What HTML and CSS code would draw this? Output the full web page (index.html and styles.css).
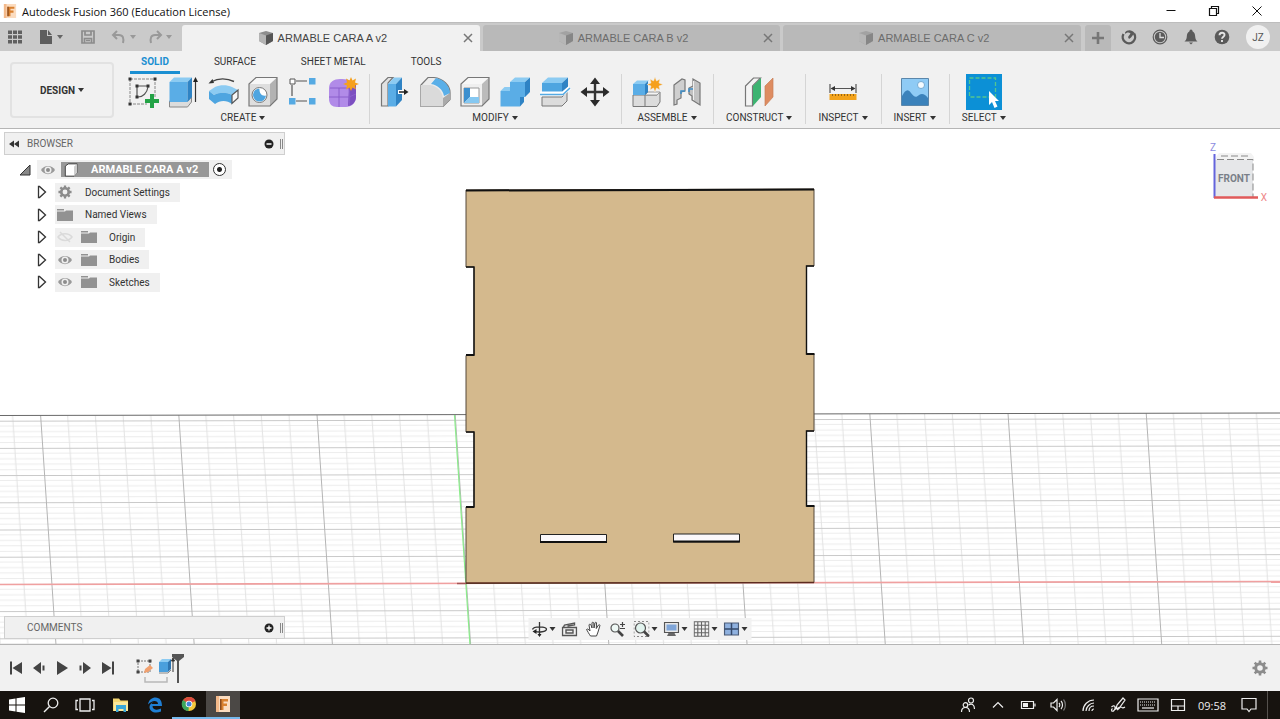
FILE: index.html
```
<!DOCTYPE html>
<html lang="en">
<head>
    <meta charset="UTF-8">
    <title>Autodesk Fusion 360 (Education License)</title>
    <meta name="viewport" content="width=device-width, initial-scale=1.0">
    <link rel="stylesheet" href="styles.css">
</head>
<body>
    <!-- shared icons -->
    <svg class="defs" aria-hidden="true">
        <symbol id="cube" viewBox="0 0 16 16">
            <path d="M1 3 8 1l7 2v8l-7 4-7-4z" fill="#8d8d8d"/>
            <path d="M1 3l7 2.500V15l-7-4z" fill="#b4b4b4"/>
            <path d="M8 5.500 15 3v8l-7 4z" fill="#555"/>
        </symbol>
        <symbol id="close" viewBox="0 0 10 10">
            <path d="M1 1l8 8M9 1L1 9" stroke="currentColor" stroke-width="1.500" fill="none"/>
        </symbol>
        <symbol id="eye" viewBox="0 0 16 12">
            <path d="M1 6C4 0.500 12 0.500 15 6 12 11.500 4 11.500 1 6z" fill="#999"/>
            <circle cx="8" cy="6" r="3.500" fill="#efefef"/>
            <circle cx="8" cy="6" r="2" fill="#8c8c8c"/>
        </symbol>
        <symbol id="folder" viewBox="0 0 16 12">
            <path d="M0 0h7v1.500H0zM0 2.500h8L9 1.500h7V12H0z" fill="#929292"/>
        </symbol>
        <symbol id="expand" viewBox="0 0 10 14">
            <path d="M1.500 1.500v11h1L8.500 7l-6-5.500z" fill="#fff" stroke="#333" stroke-width="1.300"/>
        </symbol>
        <symbol id="gear" viewBox="0 0 16 16">
            <circle cx="8" cy="8" r="4.300" fill="none" stroke="#8c8c8c" stroke-width="3"/>
            <path d="M8 .5v3M8 12.500v3M.5 8h3M12.500 8h3M2.700 2.700l2 2M11.300 11.300l2 2M2.700 13.300l2-2M11.300 4.700l2-2" stroke="#8c8c8c" stroke-width="2.600"/>
        </symbol>
        <symbol id="fusion" viewBox="0 0 16 16">
            <path d="M1 0h14v16H1z" fill="#fbdcc0"/>
            <path d="M1 0h3v16H1z" fill="#f3b98a"/>
            <path d="M5 3h8v2.500H8.500V7.500H12V10H8.500v4H5z" fill="#d9802e"/>
            <path d="M5 3h1.500v11H5z" fill="#8a4a1c"/>
        </symbol>
    </svg>

    <header class="titlebar">
        <svg class="logo" viewBox="0 0 16 16"><use href="#fusion"/></svg>
        <h1>Autodesk Fusion 360 (Education License)</h1>
        <div class="window-buttons">
            <button aria-label="Minimize"><svg viewBox="0 0 12 12"><path d="M1.500 5.500h9" stroke="#111"/></svg></button>
            <button aria-label="Restore"><svg viewBox="0 0 12 12"><path d="M1.500 3.500h7v7h-7zM3.500 3V1.500h7v7H9" fill="none" stroke="#111" stroke-width="1.200"/></svg></button>
            <button aria-label="Close"><svg viewBox="0 0 12 12"><path d="M1.500 1.500l9 9M10.500 1.500l-9 9" stroke="#111"/></svg></button>
        </div>
    </header>

    <nav class="docbar">
        <div class="quick">
            <button aria-label="Data panel"><svg viewBox="0 0 16 16"><path d="M1 1.500h4v3.500H1zM6 1.500h4v3.500H6zM11 1.500h4v3.500h-4zM1 6.300h4v3.500H1zM6 6.300h4v3.500H6zM11 6.300h4v3.500h-4zM1 11h4v3.500H1zM6 11h4v3.500H6zM11 11h4v3.500h-4z" fill="#606060"/></svg></button>
            <button class="file" aria-label="File"><svg viewBox="0 0 16 16"><path d="M2 1h7v6h5v8H2z" fill="#5e5e5e"/><path d="M10 1l4 5h-4z" fill="#5e5e5e"/></svg><span class="caret"></span></button>
            <button class="save" aria-label="Save"><svg viewBox="0 0 16 16"><path d="M2 2h12v12H2zM5 2v4h6V2M4.500 14V9.500h7V14M6 11.500h4" fill="none" stroke="#8c8c8c" stroke-width="1.700"/></svg></button>
            <button class="faded" aria-label="Undo"><svg viewBox="0 0 16 16"><path d="M2 6h6c4 0 5 3 4 8M6 2L2 6l4 4" fill="none" stroke="#999" stroke-width="2"/></svg><span class="caret"></span></button>
            <button class="faded" aria-label="Redo"><svg viewBox="0 0 16 16"><path d="M14 6H8C4 6 3 9 4 14M10 2l4 4-4 4" fill="none" stroke="#999" stroke-width="2"/></svg><span class="caret"></span></button>
        </div>
        <div class="doctabs">
            <div class="doctab active">
                <a href="#"><svg viewBox="0 0 16 16"><use href="#cube"/></svg>ARMABLE CARA A v2</a>
                <button aria-label="Close tab"><svg viewBox="0 0 10 10"><use href="#close"/></svg></button>
            </div>
            <div class="doctab">
                <a href="#"><svg viewBox="0 0 16 16"><use href="#cube"/></svg>ARMABLE CARA B v2</a>
                <button aria-label="Close tab"><svg viewBox="0 0 10 10"><use href="#close"/></svg></button>
            </div>
            <div class="doctab">
                <a href="#"><svg viewBox="0 0 16 16"><use href="#cube"/></svg>ARMABLE CARA C v2</a>
                <button aria-label="Close tab"><svg viewBox="0 0 10 10"><use href="#close"/></svg></button>
            </div>
        </div>
        <button class="new-tab" aria-label="New design"><svg viewBox="0 0 14 14"><path d="M7 1v12M1 7h12" stroke="#777" stroke-width="2.600"/></svg></button>
        <div class="account">
            <button aria-label="Extensions"><svg viewBox="0 0 16 16"><path d="M2.500 5A6.200 6.200 0 1 0 13 4.500" fill="none" stroke="#5a5a5a" stroke-width="2.400"/><path d="M4 3.500C6 .5 11 .5 13.500 4L10 8.500 8 10 7 8l2.500-3.500C8 3 6 3 4 5z" fill="#5a5a5a"/></svg></button>
            <button aria-label="Job status"><svg viewBox="0 0 16 16"><circle cx="8" cy="8" r="6.800" fill="none" stroke="#5a5a5a" stroke-width="1.200"/><circle cx="8" cy="8" r="5.200" fill="#5a5a5a"/><path d="M8 4v4.500h4" fill="none" stroke="#ddd" stroke-width="1.300"/></svg></button>
            <button aria-label="Notifications"><svg viewBox="0 0 16 16"><path d="M8 .5c1 0 1.500 1 1.500 1.800C12 3.500 12 6 12.300 8.500c.2 2 1.200 3 2.200 4h-13c1-1 2-2 2.200-4C4 6 4 3.500 6.500 2.300 6.500 1.500 7 .5 8 .5zM6 13.500h4L8 15.500z" fill="#5a5a5a"/></svg></button>
            <button aria-label="Help"><svg viewBox="0 0 16 16"><circle cx="8" cy="8" r="7.300" fill="#5a5a5a"/><path d="M5.500 6.300C5.500 2.800 10.700 3 10.500 6c0 1.600-2.500 1.800-2.500 3.800M8 11v2" fill="none" stroke="#e4e4e4" stroke-width="1.900"/></svg></button>
            <button class="avatar">JZ</button>
        </div>
    </nav>

    <section class="ribbon">
        <button class="workspace">DESIGN<span class="caret"></span></button>
        <div class="ribbon-main">
            <div class="ribbon-tabs">
                <a href="#" class="current">SOLID</a>
                <a href="#">SURFACE</a>
                <a href="#">SHEET METAL</a>
                <a href="#">TOOLS</a>
            </div>
            <div class="groups">
                <div class="group">
                    <div class="tools">
                        <button aria-label="Create sketch"><svg viewBox="0 0 32 32">
                            <path d="M3 3h25v18M3 3v25h17" fill="none" stroke="#888" stroke-dasharray="3 1"/>
                            <path d="M10 10h11M10 10v11M21 11c-1 6-5 10-10 10" fill="none" stroke="#555" stroke-width="1.200"/>
                            <path d="M1.500 1.500h3v3h-3zM26.500 1.500h3v3h-3zM1.500 26.500h3v3h-3zM8.500 8.500h3v3h-3zM19.500 8.500h3v3h-3zM8.500 19.500h3v3h-3z" fill="#333"/>
                            <path d="M23 18h4v5h5v4h-5v5h-4v-5h-5v-4h5z" fill="#23a346"/>
                        </svg></button>
                        <button aria-label="Extrude"><svg viewBox="0 0 32 32">
                            <path d="M2.500 25h18l4-4v5l-4 5h-18z" fill="#dcdcdc" stroke="#888"/>
                            <path d="M2.500 6L7 1.500h18L20.500 6z" fill="#8ccbf2"/><path d="M2.500 6h18v20h-18z" fill="#5aade6"/><path d="M20.500 6L25 1.500V21l-4.500 5z" fill="#2f83c4"/>
                            <path d="M28.500 26V4" stroke="#333" stroke-width="1.200"/><path d="M28.500 1l2.500 5h-5z" fill="#222"/>
                        </svg></button>
                        <button aria-label="Revolve"><svg viewBox="0 0 32 32">
                            <path d="M5 5.500C11 2 20 2 27 5.500" fill="none" stroke="#444" stroke-width="1.400"/><path d="M1.500 7.500l4-4.500 1.500 4z" fill="#333"/>
                            <path d="M2 15l6-4c5-2.500 12-2.500 17 0l6 3-6 5c-5-3-13-3-18 0z" fill="#8ccbf2"/>
                            <path d="M2 15l5 4c5-3 13-3 18 0v9c-5-4-12-4-17 0l-6-5z" fill="#4ea5e0"/>
                            <path d="M31 14v8l-6 5.500v-8.500z" fill="#f6f6f6" stroke="#555" stroke-width="1.200"/>
                        </svg></button>
                        <button aria-label="Hole"><svg viewBox="0 0 32 32">
                            <path d="M2 8l7-6.500h21L23 8z" fill="#f7f7f7"/><path d="M2 8h21v22H2z" fill="#dedede"/><path d="M23 8l7-6.500V23l-7 7z" fill="#b2b2b2"/>
                            <path d="M2 8l7-6.500h21V23l-7 7H2z" fill="none" stroke="#777" stroke-width="1.200"/>
                            <circle cx="12.500" cy="19" r="7.500" fill="#fff" stroke="#777"/><path d="M12.500 12.500a6.500 6.500 0 1 0 6.500 7c-4 1-7-2-6.500-7z" fill="#4ea5e0"/>
                        </svg></button>
                        <button aria-label="Rectangular pattern"><svg viewBox="0 0 32 32">
                            <path d="M9 5h11M5 9v11M9 25h11" stroke="#555" stroke-width="1.200"/>
                            <path d="M3 3h5v5H3z" fill="#fff" stroke="#555"/><path d="M22 2h6.500v6.500H22zM2 22h6.500v6.500H2zM22 22h6.500v6.500H22z" fill="#55aae3"/>
                        </svg></button>
                        <button aria-label="Create form"><svg viewBox="0 0 32 32">
                            <path d="M2 12c0-6 5-9 11-9s13 1 16 6v12c0 6-5 10-10 10H10c-5 0-8-3-8-8z" fill="#b18be8"/>
                            <path d="M22 11c3 0 5-1 7-3v13c0 5-4 9-8 9z" fill="#7c4fc0"/>
                            <path d="M3 12h19c1 5 1 12 0 18M12 12v19M2 21h20l7-3" fill="none" stroke="#8a5fcc"/>
                            <path d="M24 1l1.500 3.500L29 2.500l-1 4 4 1.500-4 1.500 1 4-3.500-2L24 15l-1.500-3.500-3.500 2 1-4L16 8l4-1.500-1-4 3.500 2z" fill="#f6a01c"/>
                        </svg></button>
                    </div>
                    <button class="menu">CREATE<span class="caret"></span></button>
                </div>
                <div class="group">
                    <div class="tools">
                        <button aria-label="Press pull"><svg viewBox="0 0 32 32">
                            <path d="M2.500 30V8L9 1.500h5L9 7v23z" fill="#e2e2e2" stroke="#777" stroke-width="1.200"/>
                            <path d="M9 8l6-6.500h8L17 8z" fill="#8ccbf2"/><path d="M9 8h8v22.500H9z" fill="#5aade6"/><path d="M17 8l6-6.500V24l-6 6.500z" fill="#2f83c4"/>
                            <path d="M19 16h8" stroke="#fff" stroke-width="4"/><path d="M20 16h7" stroke="#222" stroke-width="1.500"/><path d="M25 13l4.500 3-4.500 3z" fill="#222"/>
                        </svg></button>
                        <button aria-label="Fillet"><svg viewBox="0 0 32 32">
                            <path d="M2 9l7-7.500h6c9 1 16 8 16 15v7l-7 7H2z" fill="#ececec" stroke="#777" stroke-width="1.200"/>
                            <path d="M2 9h9c7 1 12 6 13 13v8.500H2z" fill="#dadada"/><path d="M24 22l7-5v6.500l-7 7z" fill="#aaa"/>
                            <path d="M12 8l5-6c7 1 14 8 14 15l-6 3c-1-6-6-11-13-12z" fill="#5aafe8"/>
                        </svg></button>
                        <button aria-label="Shell"><svg viewBox="0 0 32 32">
                            <path d="M2 8l7-6.500h21L23 8z" fill="#f7f7f7"/><path d="M2 8h21v22H2z" fill="#efefef"/><path d="M23 8l7-6.500V23l-7 7z" fill="#bbb"/>
                            <path d="M2 8l7-6.500h21V23l-7 7H2z" fill="none" stroke="#777" stroke-width="1.200"/>
                            <path d="M5 12h15v15H5z" fill="#fff" stroke="#999"/><path d="M5 12h6v9l-6 6z" fill="#3c8fce"/><path d="M5 27l6-6h9v6z" fill="#86c8f1"/>
                        </svg></button>
                        <button aria-label="Combine"><svg viewBox="0 0 32 32">
                            <path d="M11 6l5-4.500h15L26 6z" fill="#8ccbf2"/><path d="M1.500 15l4-4H11v4z" fill="#8ccbf2"/>
                            <path d="M11 6h15v15h-5v9.500H1.500V15H11z" fill="#5aade6"/><path d="M26 6l5-4.500V16l-5 5zM21 21h4v5l-4 4.500z" fill="#2f83c4"/>
                        </svg></button>
                        <button aria-label="Split body"><svg viewBox="0 0 32 32">
                            <path d="M3 21h20l5-5v9l-5 5H3z" fill="#dcdcdc" stroke="#777"/>
                            <path d="M3 7l6-5.500h20L23 7z" fill="#8ccbf2"/><path d="M3 7h20v10H3z" fill="#4ea5e0"/><path d="M23 7l6-5.500V12l-6 5z" fill="#2f83c4"/>
                            <path d="M1 17.500h23l7-6" fill="none" stroke="#fff" stroke-width="4"/><path d="M1 18.500h23l7-6.500" fill="none" stroke="#55aae3" stroke-width="1.600"/>
                        </svg></button>
                        <button aria-label="Move"><svg viewBox="0 0 32 32">
                            <path d="M16 5v22M5 16h22" stroke="#333" stroke-width="2.400"/>
                            <path d="M16 1.500l5 6.500H11zM16 30.500l5-6.500H11zM1.500 16L8 11v10zM30.500 16L24 11v10z" fill="#2b2b2b"/>
                        </svg></button>
                    </div>
                    <button class="menu">MODIFY<span class="caret"></span></button>
                </div>
                <div class="group">
                    <div class="tools">
                        <button aria-label="New component"><svg viewBox="0 0 32 32">
                            <path d="M2 19h24l3-3v10l-3 4.500H2z" fill="#dcdcdc" stroke="#777"/><path d="M14 19v11.500" stroke="#777"/><path d="M14 19l3-3h12l-3 3z" fill="#f4f4f4" stroke="#999"/>
                            <path d="M2 8l4-3.500h12L14 8z" fill="#8ccbf2"/><path d="M2 8h12v11H2z" fill="#5aade6"/><path d="M14 8l3-3v11l-3 3z" fill="#2f83c4"/>
                            <path d="M24 1l1.500 4L29 3l-1 4 4 1.500-4 1.500 1 4-3.500-2L24 16l-1.500-4-3.500 2 1-4-4-1.500L20 7l-1-4 3.500 2z" fill="#f6a01c" stroke="#f1f1f1" stroke-width=".5"/>
                        </svg></button>
                        <button aria-label="Joint"><svg viewBox="0 0 32 32">
                            <path d="M3 9l8-6 3 1v11l-4 1v6l-4 2v4l-3 1z" fill="#cfcfcf" stroke="#777" stroke-width="1.200"/>
                            <path d="M29 7v22l-8-5v-4l-3-2v-6l4-2V3z" fill="#c2c2c2" stroke="#777" stroke-width="1.200"/><path d="M22.500 5v19" stroke="#eee"/>
                            <path d="M10 18v-3h4M18 16v-3h4" fill="none" stroke="#3e8fc9" stroke-width="1.500"/>
                        </svg></button>
                    </div>
                    <button class="menu">ASSEMBLE<span class="caret"></span></button>
                </div>
                <div class="group">
                    <div class="tools">
                        <button aria-label="Offset plane"><svg viewBox="0 0 32 32">
                            <path d="M2.500 10l8-8h7l-8 8v20h-7z" fill="#f4f4f4" stroke="#777" stroke-width="1.200"/>
                            <path d="M10 10l8-8v19l-8 9z" fill="#3cb371"/><path d="M22 10l8-8v19l-8 9z" fill="#de8c61" stroke="#c98058" stroke-width=".7"/>
                        </svg></button>
                    </div>
                    <button class="menu">CONSTRUCT<span class="caret"></span></button>
                </div>
                <div class="group">
                    <div class="tools">
                        <button aria-label="Measure"><svg viewBox="0 0 32 32">
                            <path d="M3 8v9M29 8v9M5 12.500h22" stroke="#555" stroke-width="1.200"/><path d="M3.500 12.500L8 10v5zM28.500 12.500L24 10v5z" fill="#333"/>
                            <path d="M2.500 18h27v6h-27z" fill="#f3a31b"/><path d="M5 19h23" stroke="#7c5310" stroke-width="1.500" stroke-dasharray="1 2"/>
                        </svg></button>
                    </div>
                    <button class="menu">INSPECT<span class="caret"></span></button>
                </div>
                <div class="group">
                    <div class="tools">
                        <button aria-label="Insert image"><svg viewBox="0 0 32 32">
                            <path d="M2.500 2.500h27v27h-27z" fill="#8fcbf5" stroke="#5b87ab"/>
                            <path d="M3 20c3-6 6-8 9-3 3 4 5 5 8 2 3-2 6-1 9 3v7H3z" fill="#3b82bb"/><circle cx="22" cy="9" r="3.500" fill="#f5fbff" stroke="#5794c2" stroke-width=".7"/>
                        </svg></button>
                    </div>
                    <button class="menu">INSERT<span class="caret"></span></button>
                </div>
                <div class="group">
                    <div class="tools">
                        <button class="picked" aria-label="Select"><svg viewBox="0 0 36 36">
                            <path d="M3.500 4h26v19h-26z" fill="none" stroke="#53c590" stroke-width="1.300" stroke-dasharray="4 2"/>
                            <path d="M23 17v14l3-3 2.500 6 3-1.500-2.500-5.500h4z" fill="#fff"/>
                        </svg></button>
                    </div>
                    <button class="menu">SELECT<span class="caret"></span></button>
                </div>
            </div>
        </div>
    </section>

    <main class="viewport">
        <svg class="scene" viewBox="0 129 1280 516" preserveAspectRatio="xMidYMin slice" role="img" aria-label="Model view">
            <defs>
                <!-- one major cell: 5 x 5 minor lines, origin on the sketch origin -->
                <pattern id="grid" width="138.200" height="27.200" patternUnits="userSpaceOnUse" patternTransform="matrix(1 -0.002 0.067 1 466 583)">
                    <path d="M0 5.400h139M0 10.900h139M0 16.300h139M0 21.800h139" stroke="#ececec"/>
                    <path d="M27.600 0v28M55.300 0v28M82.900 0v28M110.600 0v28" stroke="#e2e2e2"/>
                    <path d="M0 .5h139" stroke="#c8c8c8"/>
                    <path d="M.5 0v28" stroke="#b4b4b4"/>
                </pattern>
            </defs>
            <path d="M0 415.500L1280 413v232H0z" fill="url(#grid)"/>
            <path d="M0 415.500L1280 413" stroke="#6a6a6a"/>
            <path d="M0 584.500L1280 581.500" stroke="#f0a0a0" stroke-width="1.600"/>
            <path d="M454.500 415L470 645" stroke="#8aec8a" stroke-width="1.200"/>
            <path d="M466 190L814 189V266H806.500V354H814V431H806.500V506H814V582.500L466 583.500V507H474V432H466V355.500H474V267H466z" fill="#d4b98d" stroke="#55483a" stroke-width="1"/>
            <path d="M466 190.500L814 189.500" stroke="#111" stroke-width="2"/>
            <path d="M466 267h8v88h-8M466 432h8v75h-8M814 266h-7.500v88h7.500M814 431h-7.500v75h7.500" fill="none" stroke="#111" stroke-width="1.400"/>
            <path d="M466 507h8M806.500 506h8M466 355h8M806.500 354h8" stroke="#111" stroke-width="2.200"/>
            <path d="M457 583.500h9" stroke="#a35555" stroke-width="1.500"/>
            <path d="M466 583L814 582.500" stroke="#5c2a1e" stroke-width="1.300"/>
            <path d="M540.500 534.500h66v8h-66zM673.500 534h66v8h-66z" fill="#fbf8fa" stroke="#222"/>
            <path d="M540 542h67M673 541.500h67" stroke="#111" stroke-width="2"/>
        </svg>

        <aside class="browser">
            <div class="panel-head">
                <button aria-label="Collapse"><svg viewBox="0 0 12 10"><path d="M6 1.500v7L1 5zM11 1.500v7L6 5z" fill="#333"/></svg></button>
                <h2>BROWSER</h2>
                <button aria-label="Hide"><svg viewBox="0 0 10 10"><circle cx="5" cy="5" r="4.500" fill="#222"/><path d="M2.500 5h5" stroke="#fff" stroke-width="1.500"/></svg></button>
                <span class="grip"></span>
            </div>
            <ul class="tree">
                <li class="root">
                    <svg class="arrow" viewBox="0 0 12 12"><path d="M11 1v10H1z" fill="#888" stroke="#333"/></svg>
                    <span class="chip">
                        <svg class="icon" viewBox="0 0 16 12"><use href="#eye"/></svg>
                        <span class="selected"><svg class="icon" viewBox="0 0 16 16"><path d="M1.500 3.500L5 1h10v10l-3.500 4h-10z" fill="#fff" stroke="#333"/><path d="M11.500 4L15 1v10l-3.500 4z" fill="#ccc"/></svg>ARMABLE CARA A v2</span>
                        <input type="radio" name="component" aria-label="Activate component" checked>
                    </span>
                </li>
                <li>
                    <svg class="arrow" viewBox="0 0 10 14"><use href="#expand"/></svg>
                    <span class="chip"><svg class="icon" viewBox="0 0 16 16"><use href="#gear"/></svg>Document Settings</span>
                </li>
                <li>
                    <svg class="arrow" viewBox="0 0 10 14"><use href="#expand"/></svg>
                    <span class="chip"><svg class="icon" viewBox="0 0 16 12"><use href="#folder"/></svg>Named Views</span>
                </li>
                <li>
                    <svg class="arrow" viewBox="0 0 10 14"><use href="#expand"/></svg>
                    <span class="chip"><svg class="icon" viewBox="0 0 16 12"><path d="M1 6C4 1.500 12 1.500 15 6 12 10.500 4 10.500 1 6zM3 1l10 10" fill="none" stroke="#dadada" stroke-width="1.500"/></svg><svg class="icon second" viewBox="0 0 16 12"><use href="#folder"/></svg>Origin</span>
                </li>
                <li>
                    <svg class="arrow" viewBox="0 0 10 14"><use href="#expand"/></svg>
                    <span class="chip"><svg class="icon" viewBox="0 0 16 12"><use href="#eye"/></svg><svg class="icon second" viewBox="0 0 16 12"><use href="#folder"/></svg>Bodies</span>
                </li>
                <li>
                    <svg class="arrow" viewBox="0 0 10 14"><use href="#expand"/></svg>
                    <span class="chip"><svg class="icon" viewBox="0 0 16 12"><use href="#eye"/></svg><svg class="icon second" viewBox="0 0 16 12"><use href="#folder"/></svg>Sketches</span>
                </li>
            </ul>
        </aside>

        <svg class="viewcube" viewBox="0 0 70 70" role="img" aria-label="View cube">
            <path d="M15 20h38v38H15z" fill="#e6e7e9"/>
            <path d="M16 17l3-4h32l3 4v3H16z" fill="#f3f3f3"/>
            <path d="M17 19.500h36V57M21 16h30" fill="none" stroke="#888" stroke-dasharray="7 3"/>
            <path d="M14.500 14v44" stroke="#6464dc" stroke-width="2"/>
            <path d="M14 57.500h44" stroke="#e05a5a" stroke-width="2.400"/>
            <text x="34" y="42" class="face">FRONT</text>
            <text x="13" y="11" class="axis-z">Z</text>
            <text x="64" y="61" class="axis-x">X</text>
        </svg>

        <div class="panel-head comments">
            <h2>COMMENTS</h2>
            <button aria-label="Add comment"><svg viewBox="0 0 10 10"><circle cx="5" cy="5" r="4.500" fill="#222"/><path d="M2.500 5h5M5 2.500v5" stroke="#fff" stroke-width="1.300"/></svg></button>
            <span class="grip"></span>
        </div>

        <div class="navbar">
            <button aria-label="Orbit"><svg viewBox="0 0 16 16"><path d="M8 1v14M1 8.500C2 5 14 5 15 8c0 3-8 3.500-11 2.500" fill="none" stroke="#333" stroke-width="1.300"/><path d="M1 10.500l4-2.500v5zM6 13l2 3 2-3z" fill="#222"/></svg><span class="caret"></span></button>
            <button aria-label="Look at"><svg viewBox="0 0 16 16"><path d="M1 6.500h14v8H1zM4.500 9h7v3h-7zM2 6l1-2 10-2v2L6 5" fill="none" stroke="#555" stroke-width="1.400"/></svg></button>
            <button aria-label="Pan"><svg viewBox="0 0 16 16"><path d="M5 15C3.500 13 2 10 1 8.500 1.500 7.500 3 8 4.500 10L3.500 4c0-1 1.500-1 2 0L6.500 7V2c0-1 1.500-1 1.800 0L8.500 7l1-5c.2-1 1.500-1 1.500 0L10.800 7.500 13 4c.8-.8 1.800 0 1.300 1L12.500 11 11 15z" fill="#fff" stroke="#444"/></svg></button>
            <button aria-label="Zoom"><svg viewBox="0 0 16 16"><circle cx="5.500" cy="7" r="4" fill="#eef8f5" stroke="#555" stroke-width="1.200"/><path d="M8.500 10l5 5" stroke="#444" stroke-width="2.600"/><path d="M10.500 3.500h5M13 1v5M10.500 7.500h5" stroke="#444" stroke-width="1.200"/></svg></button>
            <button aria-label="Fit"><svg viewBox="0 0 16 16"><path d="M.5.500h15v15H.5z" fill="none" stroke="#888" stroke-dasharray="2 2"/><circle cx="7" cy="7" r="5" fill="#e2f3ee" stroke="#555" stroke-width="1.200"/><path d="M10.500 10.500l5 5" stroke="#444" stroke-width="2.600"/></svg><span class="caret"></span></button>
            <button aria-label="Display settings"><svg viewBox="0 0 16 16"><path d="M1 1.500h14v10H1z" fill="#e8e8e8" stroke="#555" stroke-width="1.200"/><path d="M3 3.500h10v6H3z" fill="#7fa5d8"/><path d="M5 12h6l1.500 3h-9z" fill="#666"/></svg><span class="caret"></span></button>
            <button aria-label="Grid and snaps"><svg viewBox="0 0 16 16"><path d="M.7.700h14.600v14.600H.7zM4.300 1v14M8 1v14M11.700 1v14M1 4.300h14M1 8h14M1 11.700h14" fill="none" stroke="#666" stroke-width="1.100"/></svg><span class="caret"></span></button>
            <button aria-label="Viewports"><svg viewBox="0 0 16 16"><path d="M1 2h14v12H1z" fill="#8fb1df" stroke="#4a5b76" stroke-width="1.200"/><path d="M8 2v12M1 8h14" stroke="#35496b" stroke-width="1.500"/></svg><span class="caret"></span></button>
        </div>
    </main>

    <footer class="timeline">
        <div class="playback">
            <button aria-label="Go to start"><svg viewBox="0 0 14 14"><path d="M1 .5h2v13H1zM13 1v12L3.500 7z" fill="#444"/></svg></button>
            <button aria-label="Step back"><svg viewBox="0 0 14 14"><path d="M9 1v12L1 7zM10.500 4.500h2v5h-2z" fill="#444"/></svg></button>
            <button aria-label="Play"><svg viewBox="0 0 14 14"><path d="M2 0v14l11-7z" fill="#444"/></svg></button>
            <button aria-label="Step forward"><svg viewBox="0 0 14 14"><path d="M5 1v12l8-6zM1.500 4.500h2v5h-2z" fill="#444"/></svg></button>
            <button aria-label="Go to end"><svg viewBox="0 0 14 14"><path d="M11 .5h2v13h-2zM1 1v12l9.500-6z" fill="#444"/></svg></button>
        </div>
        <svg class="history" viewBox="0 -3 50 36" role="img" aria-label="Sketch, extrude">
            <path d="M3 8h12v11H3z" fill="none" stroke="#777" stroke-dasharray="2 1"/><path d="M1.500 6.500h3v3h-3zM13.500 6.500h3v3h-3zM1.500 17.500h3v3h-3z" fill="#444"/>
            <path d="M9 20l1-4 5-4 3 3-5 4z" fill="#f1a06e"/>
            <path d="M24 9l3-3h9l-3 3z" fill="#8ccbf2"/><path d="M24 9h9v10h-9z" fill="#4a9fdc"/><path d="M33 9l3-3v10l-3 3z" fill="#2f75b0"/><path d="M24 20h9l3-3" fill="none" stroke="#888"/>
            <path d="M38 5l1.500 3h-3zM38 7v12" fill="#333" stroke="#333"/>
            <path d="M10 24v5h22v-5" fill="none" stroke="#b8b8b8" stroke-width="1.500"/>
            <path d="M37 1h12v3l-5 4v22h-2V8l-5-4z" fill="#555"/>
        </svg>
        <button class="settings" aria-label="Settings"><svg viewBox="0 0 16 16"><use href="#gear"/></svg></button>
    </footer>

    <div class="taskbar">
        <div class="apps">
            <button aria-label="Start"><svg viewBox="0 0 16 16"><path d="M0 2.500l6.500-1v6H0zM7.500 1.300L16 0v7.500H7.500zM0 8.500h6.500v6L0 13.500zM7.500 8.500H16V16l-8.500-1.300z" fill="#fff"/></svg></button>
            <button aria-label="Search"><svg viewBox="0 0 16 16"><circle cx="10" cy="6" r="4.800" fill="none" stroke="#eee" stroke-width="1.300"/><path d="M6.500 9.500L1 15" stroke="#eee" stroke-width="1.500"/></svg></button>
            <button aria-label="Task view"><svg class="wide" viewBox="0 0 20 16"><path d="M5 2h10v12H5zM3 3.500H1v9h2M17 3.500h2v9h-2" fill="none" stroke="#eee" stroke-width="1.300"/></svg></button>
        </div>
        <div class="apps">
            <button aria-label="Explorer"><svg viewBox="0 0 16 16"><path d="M0 1.500h6l1.500 2H15V14H0z" fill="#f5d772"/><path d="M1 5h14v9H1z" fill="#fbe89b"/><path d="M3 8h10v7h-2.500v-3h-5v3H3z" fill="#3aa7d8"/></svg></button>
            <button aria-label="Edge"><svg viewBox="0 0 16 16"><path d="M1 7.500C2 2.500 5 .5 8.500.5 13 .5 15 4 15 9H5.500c0 4 5 4.500 8.500 2.500v3C8.500 17 2.500 15 2.500 10c0-2 1.500-4 3.500-5-1 1-1.500 1.500-1.500 2h6.500C11 3 5 2.500 1 7.500z" fill="#1f7fd4"/></svg></button>
            <button class="running" aria-label="Chrome"><svg viewBox="0 0 16 16"><circle cx="8" cy="8" r="7" fill="#f3c73b"/><path d="M8 8L2 4.500A7 7 0 0 1 14.500 5z" fill="#dc4b3e"/><path d="M8 8l-6-4A7 7 0 0 0 7.500 15z" fill="#3ba55c"/><circle cx="8" cy="8" r="3.300" fill="#fff"/><circle cx="8" cy="8" r="2.500" fill="#4285d6"/></svg></button>
            <button class="running front" aria-label="Fusion 360"><svg viewBox="0 0 16 16"><use href="#fusion"/></svg></button>
        </div>
        <div class="tray">
            <button aria-label="People"><svg viewBox="0 0 16 16"><circle cx="5.500" cy="8" r="2.300"/><path d="M1.500 15c0-6 8-6 8 0"/><circle cx="11" cy="3.500" r="2.500"/><path d="M8.500 8c3-2 6-.5 6 4"/></svg></button>
            <button aria-label="Hidden icons"><svg viewBox="0 0 16 16"><path d="M3 10.500l5-5 5 5"/></svg></button>
            <button aria-label="Battery"><svg viewBox="0 0 16 16"><path d="M1.500 4.500h12v7h-12zM15 6.500v3"/><path d="M3 6h5v4H3z" fill="#eee" stroke="none"/></svg></button>
            <button aria-label="Volume"><svg viewBox="0 0 16 16"><path d="M1 6h2.500L7 2.500v11L3.500 10H1zM9 6c1 1 1 3 0 4M11 4c2 2 2 6 0 8"/><path d="M13.500 2.500c2.500 3 2.500 8 0 11" stroke="#777"/></svg></button>
            <button aria-label="Network"><svg viewBox="0 0 16 16"><path d="M3 14C3 8 8 3 14 3M6 14c0-4 4-8 8-8M9 14c0-3 2-5 5-5M12 14c0-1 1-2 2-2"/></svg></button>
            <button aria-label="Ink"><svg viewBox="0 0 16 16"><path d="M1.500 10c3-3 5 0 2.500 3.500-2 2-3.500-.5-1.500-2M6 12l1-4 6-7 2 2-5 7zM7 13c2-1 3-3 4-3s1 2 4 0"/></svg></button>
            <button aria-label="Touch keyboard"><svg class="keyboard" viewBox="0 0 22 14"><path d="M1 1h20v12H1z"/><path d="M3 4h16M3 7h16" stroke-dasharray="1 1"/><path d="M5 10h12"/></svg></button>
            <button aria-label="Touchpad"><svg viewBox="0 0 16 16"><path d="M1.500 2.500h13v11h-13zM1.500 9h13M8 9v4.500"/></svg></button>
            <time>09:58</time>
            <button class="action" aria-label="Action center"><svg viewBox="0 0 16 16"><path d="M1 1.500h14v10.500h-5L8 14.500 6 12H1z"/></svg></button>
            <span class="peek"></span>
        </div>
    </div>
</body>
</html>
```
FILE: styles.css
```
* {
    box-sizing: border-box;
}
body {
    margin: 0;
    height: 100vh;
    display: flex;
    flex-direction: column;
    overflow: hidden;
    background: #f1f1f1;
    color: #333;
    font-family: Roboto, "Liberation Sans", sans-serif;
    font-size: 10px;
}
button {
    display: flex;
    align-items: center;
    justify-content: center;
    padding: 0;
    border: 0;
    background: none;
    color: inherit;
    font: inherit;
}
a {
    color: inherit;
    text-decoration: none;
}
h1, h2 {
    margin: 0;
    font-size: inherit;
    font-weight: normal;
}
svg {
    display: block;
    flex: none;
    width: 16px;
    height: 16px;
}
.defs {
    position: absolute;
    width: 0;
    height: 0;
}
.caret {
    margin-left: 3px;
    border: 3px solid transparent;
    border-top: 4px solid #333;
    border-bottom: 0;
}

/* title bar */
.titlebar {
    flex: none;
    height: 22px;
    display: flex;
    align-items: center;
    padding-left: 3px;
    background: #fff;
}
.titlebar .logo {
    width: 14px;
    height: 14px;
}
.titlebar h1 {
    flex: 1;
    margin-left: 5px;
    color: #111;
    font-family: "Open Sans", "Noto Sans", sans-serif;
    font-size: 11px;
}
.window-buttons {
    display: flex;
    padding-right: 2px;
}
.window-buttons button {
    width: 43px;
    height: 20px;
}
.window-buttons svg {
    width: 12px;
    height: 12px;
}

/* document tabs */
.docbar {
    flex: none;
    height: 29px;
    display: flex;
    background: #cacaca;
    border-top: 1px solid #bdbdbd;
}
.quick {
    width: 182px;
    display: flex;
    align-items: center;
    gap: 12px;
    padding-left: 7px;
}
.quick .file {
    margin-left: 3px;
}
.quick .save {
    margin: 0 3px 0 5px;
}
.quick .faded {
    margin-right: -1px;
}
.quick .caret {
    border-top-color: #666;
}
.quick .faded .caret {
    border-top-color: #999;
}
.doctabs {
    flex: 1;
    display: flex;
    gap: 3px;
    padding-top: 2px;
}
.doctab {
    flex: 1;
    display: flex;
    align-items: center;
    padding: 0 7px 0 0;
    background: #b9b9b9;
    border-radius: 3px 3px 0 0;
    color: #6c6c6c;
    font-family: "Liberation Sans", sans-serif;
    font-size: 11px;
}
.doctab.active {
    background: #f1f1f1;
    color: #444;
}
.doctab a {
    flex: 1;
    display: flex;
    align-items: center;
    justify-content: center;
    gap: 4px;
}
.doctab:not(.active) a svg {
    opacity: 0.5;
}
.doctab button {
    color: #777;
}
.doctab button svg {
    width: 10px;
    height: 10px;
}
.new-tab {
    width: 26px;
    margin: 2px 0 0 4px;
    background: #b9b9b9;
    border-radius: 3px 3px 0 0;
}
.new-tab svg {
    width: 14px;
    height: 14px;
}
.account {
    display: flex;
    align-items: center;
    gap: 15px;
    padding: 0 10px;
}
.account .avatar {
    width: 24px;
    height: 24px;
    margin-left: 1px;
    border-radius: 50%;
    background: #f0f0f0;
    color: #555;
}

/* ribbon */
.ribbon {
    flex: none;
    display: flex;
    padding-left: 10px;
    border-bottom: 1px solid #b5b5b5;
}
.workspace {
    width: 104px;
    margin: 11px 4px 10px 0;
    border: 2px solid #e2e2e2;
    border-radius: 4px;
    font-weight: bold;
}
.ribbon-tabs {
    height: 23px;
    display: flex;
    gap: 23px;
    padding-left: 12px;
}
.ribbon-tabs a {
    padding: 0 11px;
    line-height: 22px;
}
.ribbon-tabs .current {
    border-bottom: 3px solid #1b8fd2;
    color: #1b8fd2;
    font-weight: bold;
}
.groups {
    display: flex;
    padding-bottom: 4px;
}
.group {
    height: 50px;
    display: flex;
    flex-direction: column;
    align-items: center;
    justify-content: space-between;
    padding: 0 6px 0 5px;
    border-right: 1px solid #d5d5d5;
}
.group:last-child {
    border-right: 0;
}
.tools {
    height: 36px;
    display: flex;
    align-items: center;
}
.tools button {
    width: 40px;
}
.tools svg {
    width: 32px;
    height: 32px;
}
.tools .picked {
    width: 36px;
    height: 36px;
    background: #0c90d6;
}
.tools .picked svg {
    width: 36px;
    height: 36px;
}
.menu {
    padding: 0 7px;
    line-height: 12px;
}

/* model view */
.viewport {
    position: relative;
    flex: 1;
    min-height: 0;
    display: flex;
    flex-direction: column;
    justify-content: space-between;
    padding: 3px 0 5px 4px;
    background: #fff;
    border-bottom: 1px solid #b5b5b5;
}
.scene {
    position: absolute;
    inset: 0;
    width: 100%;
    height: 100%;
}
.browser, .comments {
    position: relative;
    width: 281px;
}
.panel-head {
    height: 23px;
    display: flex;
    align-items: center;
    padding-left: 3px;
    background: #f0f0f0;
    border: 1px solid #cfcfcf;
    color: #666;
}
.panel-head h2 {
    flex: 1;
    margin-left: 7px;
}
.panel-head svg {
    width: 12px;
    height: 10px;
}
.comments {
    padding-left: 15px;
}
.grip {
    width: 3px;
    height: 10px;
    margin: 0 1px 0 5px;
    border: solid #888;
    border-width: 0 1px;
}
.tree {
    height: 132px;
    display: flex;
    flex-direction: column;
    justify-content: space-between;
    margin: 5px 0 0;
    padding: 0;
    list-style: none;
}
.tree li {
    height: 19px;
    display: flex;
    align-items: center;
    padding-left: 33px;
}
.tree .root {
    padding-left: 15px;
}
.tree .arrow {
    width: 10px;
    height: 14px;
    margin-right: 8px;
}
.tree .root .arrow {
    width: 12px;
    height: 12px;
    margin-right: 6px;
}
.chip {
    height: 19px;
    display: flex;
    align-items: center;
    padding: 0 10px 0 2px;
    background: #f0f0f0;
}
.chip .icon {
    height: 14px;
    margin-right: 12px;
}
.chip .icon:has(+ .second) {
    margin-right: 8px;
}
.root .chip {
    padding: 0 6px 0 3px;
}
.root .chip > .icon {
    margin-right: 5px;
}
.selected {
    height: 15px;
    display: flex;
    align-items: center;
    padding: 0 11px 0 2px;
    background: #979797;
    color: #fff;
    font-size: 11px;
    font-weight: bold;
}
.chip input {
    appearance: none;
    width: 13px;
    height: 13px;
    margin: 0 0 0 4px;
    border: 1px solid #333;
    border-radius: 50%;
    background: radial-gradient(circle, #222 2px, #fff 3px);
}
.viewcube {
    position: absolute;
    top: 11px;
    right: 10px;
    width: 70px;
    height: 70px;
    text-anchor: middle;
}
.face {
    fill: #7a7f88;
    font-weight: bold;
}
.axis-z {
    fill: #8b8be0;
}
.axis-x {
    fill: #ee8888;
}
.navbar {
    position: absolute;
    left: 50%;
    bottom: 4px;
    height: 22px;
    display: flex;
    align-items: center;
    gap: 8px;
    padding: 0 6px 0 3px;
    background: #f2f2f2;
    transform: translateX(-50%);
}
.navbar .caret {
    margin-left: 2px;
    margin-right: -2px;
}

/* timeline */
.timeline {
    flex: none;
    height: 46px;
    display: flex;
    align-items: center;
    padding: 0 12px 0 9px;
}
.playback {
    display: flex;
    gap: 9px;
}
.playback svg {
    width: 14px;
    height: 14px;
}
.history {
    width: 50px;
    height: 36px;
    margin-left: 20px;
}
.settings {
    margin-left: auto;
}

/* windows taskbar */
.taskbar {
    flex: none;
    height: 28px;
    display: flex;
    gap: 2px;
    padding-right: 3px;
    background: #17130f;
    color: #eee;
}
.apps {
    display: flex;
}
.apps button {
    width: 34px;
}
.apps .wide {
    width: 20px;
}
.apps .running {
    border: solid #76b9ed;
    border-width: 0 0 2px;
}
.apps .front {
    background: #4b4845;
}
.tray {
    display: flex;
    align-items: center;
    margin-left: auto;
}
.tray button {
    width: 30px;
    height: 28px;
}
.tray svg {
    fill: none;
    stroke: #eee;
    stroke-width: 1.2;
}
.tray .keyboard {
    width: 22px;
    height: 14px;
}
.tray time {
    width: 38px;
    text-align: center;
    font-family: "Open Sans", "Noto Sans", sans-serif;
    font-size: 11px;
}
.tray .action {
    width: 36px;
}
.peek {
    width: 10px;
    height: 28px;
    margin-left: auto;
    border-left: 1px solid #55514d;
}
```
